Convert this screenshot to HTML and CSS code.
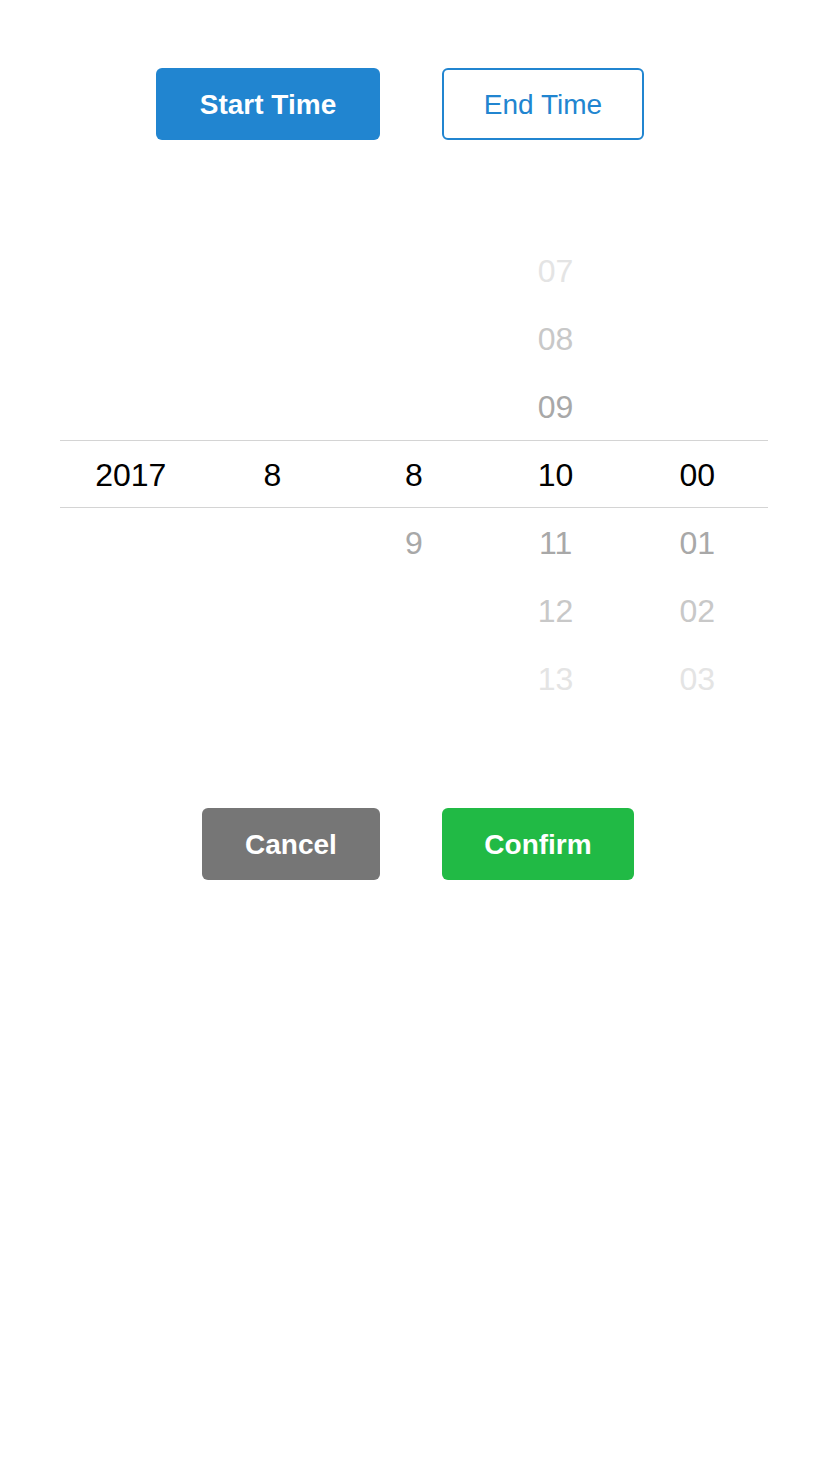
FILE: index.html
```html
<!DOCTYPE html>
<html>
<head>
<meta charset="utf-8">
<link rel="stylesheet" href="styles.css">
</head>
<body>
<div class="page">
  <div class="btn-row">
    <div class="cell-left"><button class="btn btn-blue w-start">Start Time</button></div>
    <div class="cell-right"><button class="btn btn-outline w-end">End Time</button></div>
  </div>

  <div class="picker">
    <div class="prow">
      <span></span><span></span><span></span><span class="c3">07</span><span></span>
    </div>
    <div class="prow">
      <span></span><span></span><span></span><span class="c2">08</span><span></span>
    </div>
    <div class="prow">
      <span></span><span></span><span></span><span class="c1">09</span><span></span>
    </div>
    <div class="prow selected">
      <span>2017</span><span>8</span><span>8</span><span>10</span><span>00</span>
    </div>
    <div class="prow">
      <span></span><span></span><span class="c1">9</span><span class="c1">11</span><span class="c1">01</span>
    </div>
    <div class="prow">
      <span></span><span></span><span></span><span class="c2">12</span><span class="c2">02</span>
    </div>
    <div class="prow">
      <span></span><span></span><span></span><span class="c3">13</span><span class="c3">03</span>
    </div>
  </div>

  <div class="btn-row">
    <div class="cell-left"><button class="btn btn-grey w-cancel">Cancel</button></div>
    <div class="cell-right"><button class="btn btn-green w-confirm">Confirm</button></div>
  </div>
</div>
</body>
</html>
```

FILE: styles.css
```css
html, body {
  margin: 0;
  padding: 0;
  background: #ffffff;
}

.page {
  width: 828px;
  min-height: 1472px;
  padding-top: 68px;
  box-sizing: border-box;
  font-family: "Liberation Sans", Arial, Helvetica, sans-serif;
}

.btn-row {
  display: grid;
  grid-template-columns: 1fr 1fr;
  column-gap: 62px;
  padding-right: 6px;
}

.cell-left {
  display: flex;
  justify-content: flex-end;
}

.cell-right {
  display: flex;
  justify-content: flex-start;
}

.btn {
  height: 72px;
  border: none;
  border-radius: 6px;
  font-family: "Liberation Sans", Arial, Helvetica, sans-serif;
  font-size: 28px;
  font-weight: 700;
  color: #ffffff;
  padding: 1px 0 0 0;
  margin: 0;
  box-sizing: border-box;
  display: flex;
  align-items: center;
  justify-content: center;
}

.btn-blue {
  background: #2185d0;
}

.btn-outline {
  background: #ffffff;
  border: 2px solid #2185d0;
  color: #2185d0;
  font-weight: 400;
}

.btn-grey {
  background: #767676;
}

.btn-green {
  background: #21ba45;
}

.w-start { width: 224px; }
.w-end { width: 202px; }
.w-cancel { width: 178px; }
.w-confirm { width: 192px; }

.picker {
  margin: 96px 60px;
}

.prow {
  display: grid;
  grid-template-columns: repeat(5, 1fr);
  height: 68px;
  align-items: start;
  box-sizing: border-box;
}

.prow span {
  text-align: center;
  font-size: 32px;
  line-height: 68px;
  padding-top: 1px;
  color: #000000;
}

.prow.selected {
  border-top: 1px solid #d4d4d4;
  border-bottom: 1px solid #d4d4d4;
}

.prow.selected span {
  line-height: 66px;
}

.prow span.c1 { color: #a8a8a8; }
.prow span.c2 { color: #c8c8c8; }
.prow span.c3 { color: #e4e4e4; }
```
